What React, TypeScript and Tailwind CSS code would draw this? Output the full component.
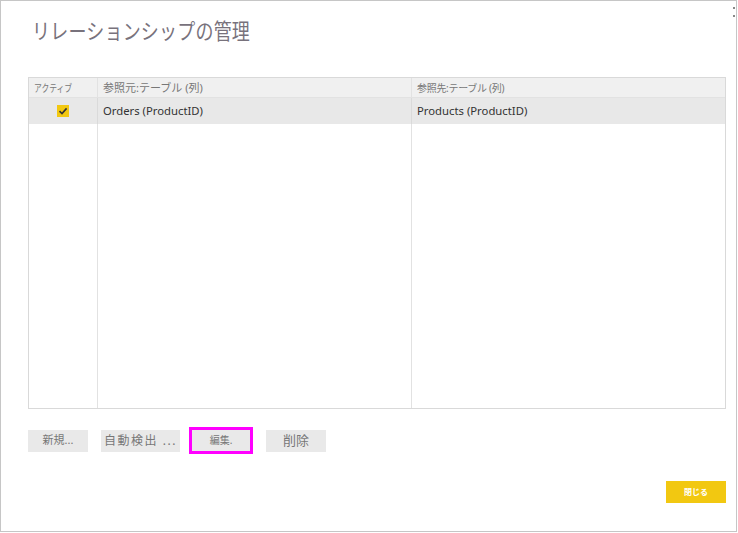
const font = { fontFamily: '"Noto Sans", "Noto Sans CJK JP", sans-serif' };

export default function App() {
  return (
    <div className="w-[738px] h-[533px] bg-white" style={font}>
      <div className="relative w-[737px] h-[532px] border border-[#c6c6c6] bg-white pl-[27px] pr-[10px] pt-[14px]">
        <span className="absolute right-[1px] top-[6px] w-[2px] h-[2px] bg-[#888]" />
        <span className="absolute right-[1px] top-[14px] w-[2px] h-[2px] bg-[#888]" />
        <h1 className="ml-[4px] text-[18px] leading-[32px] text-[#78727c] tracking-[0.2px] origin-left scale-y-[1.2]">リレーションシップの管理</h1>

        <div className="mt-[30px] w-[698px] h-[332px] border border-[#d9d9d9] grid grid-cols-[68px_314px_1fr] grid-rows-[20px_26px_1fr]">
          <div className="bg-[#f0f0f0] border-b border-[#e2e2e2] text-[10px] text-[#777] pl-[5px] leading-[20px] overflow-hidden">
            <span className="inline-block origin-left scale-x-[0.78] whitespace-nowrap">アクティブ</span>
          </div>
          <div className="bg-[#f0f0f0] border-b border-l border-[#e2e2e2] text-[11px] text-[#777] pl-[5px] leading-[20px]">参照元:テーブル (列)</div>
          <div className="bg-[#f0f0f0] border-b border-l border-[#e2e2e2] text-[10px] text-[#777] pl-[5px] leading-[20px] tracking-[-0.3px]">参照先:テーブル (列)</div>

          <div className="bg-[#e8e8e8] flex items-center justify-center">
            <span className="w-[12px] h-[12px] bg-[#f2c811] flex items-center justify-center">
              <svg width="10" height="10" viewBox="0 0 10 10">
                <path d="M1.5 5.2 L4 7.6 L8.6 2.4" fill="none" stroke="#333" strokeWidth="1.6" />
              </svg>
            </span>
          </div>
          <div className="bg-[#e8e8e8] border-l border-[#dadada] text-[11.3px] text-[#333] pl-[5px] leading-[26px]">Orders (ProductID)</div>
          <div className="bg-[#e8e8e8] border-l border-[#dadada] text-[11.3px] text-[#333] pl-[5px] leading-[26px]">Products (ProductID)</div>

          <div />
          <div className="border-l border-[#e2e2e2]" />
          <div className="border-l border-[#e2e2e2]" />
        </div>

        <div className="mt-[18px] flex items-center">
          <button className="w-[60px] h-[22px] bg-[#e9e9e9] text-[11px] text-[#777]">新規...</button>
          <button className="ml-[13px] w-[79px] h-[22px] bg-[#e9e9e9] text-[12px] text-[#777] tracking-[1.5px]">自動検出 ...</button>
          <div className="ml-[9px] border-[3px] border-[#ff00ff]">
            <button className="w-[58px] h-[21px] bg-[#e9e9e9] text-[10px] text-[#777] block">編集.</button>
          </div>
          <button className="ml-[13px] w-[60px] h-[22px] bg-[#e9e9e9] text-[13px] text-[#777]">削除</button>
        </div>

        <div className="mt-[27px] flex justify-end">
          <button className="w-[60px] h-[22px] bg-[#f2c811] text-[8px] text-white font-bold">閉じる</button>
        </div>
      </div>
    </div>
  );
}
